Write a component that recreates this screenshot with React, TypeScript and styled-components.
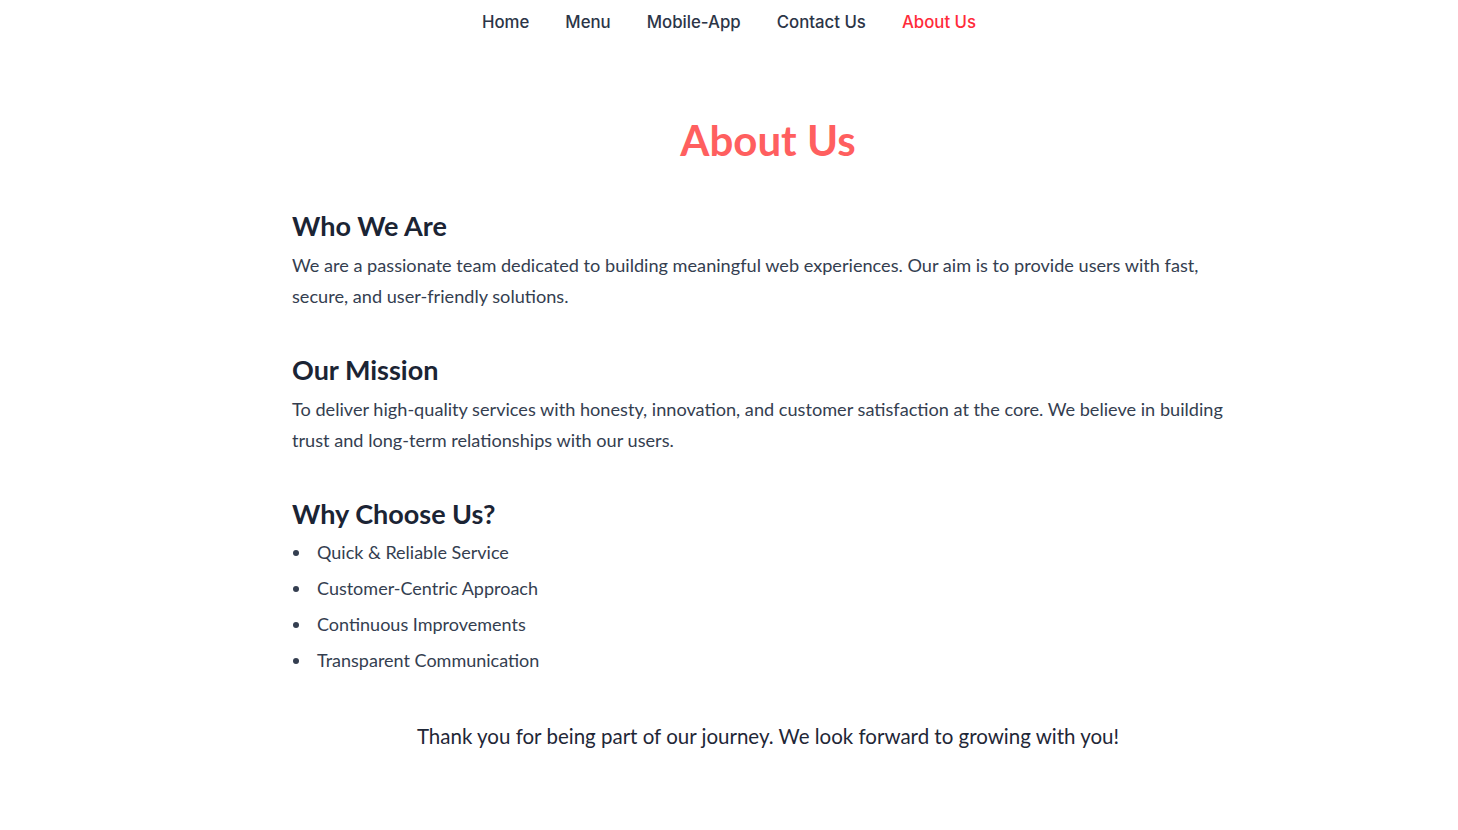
import React from "react";
import styled, { createGlobalStyle } from "styled-components";

const GlobalStyle = createGlobalStyle`
  html, body { margin: 0; padding: 0; background: #ffffff; }
  body { font-family: "Lato", "Open Sans", sans-serif; }
  * { box-sizing: border-box; }
`;

const Nav = styled.nav`
  display: flex;
  justify-content: center;
  gap: 36px;
  height: 44px;
  align-items: center;
`;

const NavLink = styled.a<{ $active?: boolean }>`
  font-family: "Inter", "Roboto", sans-serif;
  font-size: 16.8px;
  font-weight: 500;
  color: ${(p) => (p.$active ? "#ff2b3a" : "#2c3547")};
  text-decoration: none;
  line-height: 44px;
`;

const Main = styled.main`
  width: 952px;
  margin-left: 292px;
  padding-top: 70px;
`;

const Title = styled.h1`
  margin: 0 0 43px;
  text-align: center;
  font-size: 42px;
  line-height: 52px;
  font-weight: 700;
  color: #ff5f5f;
`;

const Section = styled.section`
  margin-bottom: 41px;
`;

const Heading = styled.h2`
  margin: 0 0 7px;
  font-size: 27px;
  line-height: 34px;
  font-weight: 700;
  color: #1b2434;
`;

const Para = styled.p`
  margin: 0;
  font-size: 18.15px;
  line-height: 31px;
  color: #343e50;
`;

const List = styled.ul`
  margin: -4px 0 0;
  padding: 0 0 0 20px;
`;

const Item = styled.li`
  padding-left: 5px;
  font-size: 18px;
  line-height: 36px;
  color: #343e50;
  &::marker { color: #343e50; }
`;

const Closing = styled.p`
  margin: 43px 0 0;
  text-align: center;
  font-size: 20.5px;
  line-height: 30px;
  color: #1f2737;
`;

export default function App() {
  return (
    <>
      <GlobalStyle />
      <Nav>
        <NavLink href="#">Home</NavLink>
        <NavLink href="#">Menu</NavLink>
        <NavLink href="#">Mobile-App</NavLink>
        <NavLink href="#">Contact Us</NavLink>
        <NavLink href="#" $active>About Us</NavLink>
      </Nav>
      <Main>
        <Title>About Us</Title>
        <Section>
          <Heading>Who We Are</Heading>
          <Para>
            We are a passionate team dedicated to building meaningful web experiences. Our aim is to provide users with fast, secure, and user-friendly solutions.
          </Para>
        </Section>
        <Section>
          <Heading>Our Mission</Heading>
          <Para>
            To deliver high-quality services with honesty, innovation, and customer satisfaction at the core. We believe in building trust and long-term relationships with our users.
          </Para>
        </Section>
        <div>
          <Heading>Why Choose Us?</Heading>
          <List>
            <Item>Quick &amp; Reliable Service</Item>
            <Item>Customer-Centric Approach</Item>
            <Item>Continuous Improvements</Item>
            <Item>Transparent Communication</Item>
          </List>
        </div>
        <Closing>Thank you for being part of our journey. We look forward to growing with you!</Closing>
      </Main>
    </>
  );
}
